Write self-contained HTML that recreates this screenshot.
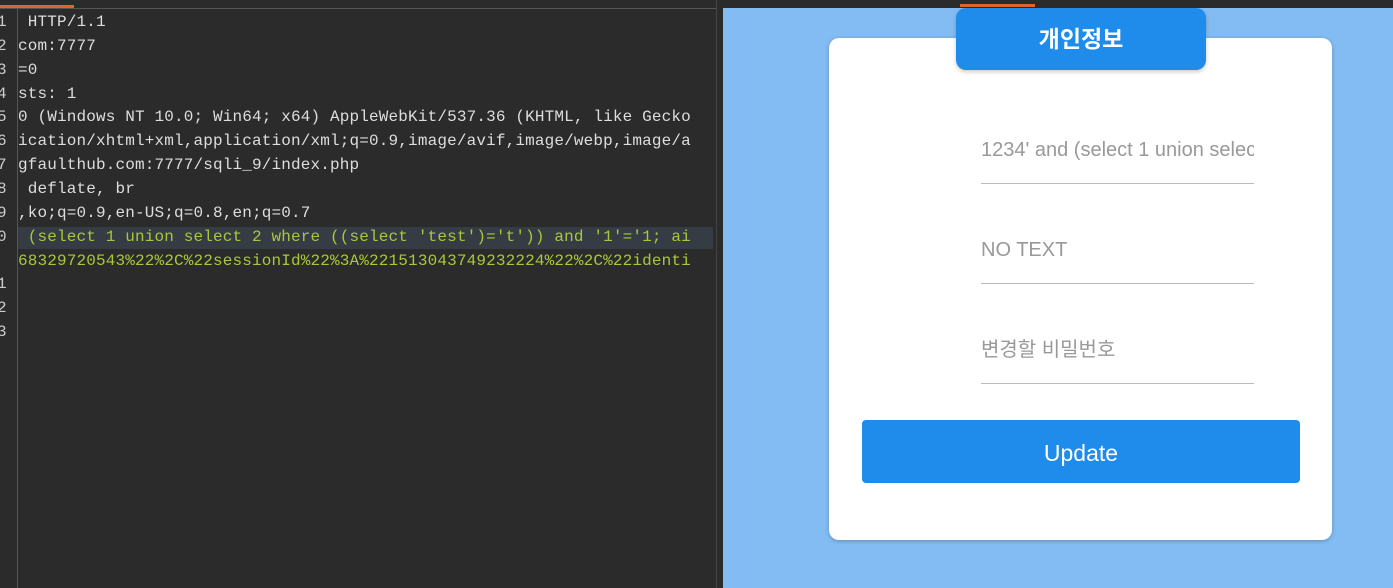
<!DOCTYPE html>
<html><head><meta charset="utf-8"><style>
body{margin:0;width:1393px;height:588px;background:#2b2b2b;position:relative;overflow:hidden;font-family:"Liberation Sans","Noto Sans CJK KR",sans-serif}
.top{position:absolute;left:0;top:0;width:1393px;height:8px;background:#2b2b2b;border-bottom:1px solid #555}
.tab1{position:absolute;left:0;top:5px;width:74px;height:3px;background:#e0622d}
.tab2{position:absolute;left:960px;top:4px;width:75px;height:3px;background:#e0622d}
.left{position:absolute;left:0;top:9px;width:715px;height:579px;background:#2b2b2b}
.gut{position:absolute;left:17px;top:9px;width:1px;height:579px;background:#555}
.ln{position:absolute;left:-3px;color:#ccc;font:16px "Liberation Mono",monospace}
.code{position:absolute;left:18px;color:#ddd;font:16px "Liberation Mono",monospace;white-space:pre;letter-spacing:0.15px;width:695px;overflow:hidden}
.hl{position:absolute;left:18px;top:227px;width:695px;height:22px;background:#363c44}
.div{position:absolute;left:716px;top:0;width:7px;height:588px;background:#2b2b2b;border-left:1px solid #444}
.right{position:absolute;left:723px;top:8px;width:670px;height:580px;background:#83bcf3}
.card{position:absolute;left:829px;top:38px;width:503px;height:502px;background:#fff;border-radius:10px;box-shadow:0 1px 4px rgba(0,0,0,.25)}
.hdr{position:absolute;left:956px;top:8px;width:250px;height:62px;background:#1f8cec;border-radius:10px;color:#fff;font-weight:bold;font-size:23px;text-align:center;line-height:62px;box-shadow:0 2px 4px rgba(0,0,0,.2)}
.inp{position:absolute;left:981px;width:273px;height:53px;border-bottom:1px solid #bbb;color:#999;font-size:20px;line-height:40px;padding-top:0;overflow:hidden;white-space:nowrap}
.btn{position:absolute;left:862px;top:420px;width:438px;height:63px;background:#1f8cec;border-radius:4px;color:#fff;font-size:23px;text-align:center;line-height:66px}
</style></head><body>
<div class="top"></div><div class="tab1"></div>
<div class="left"></div><div class="hl"></div><div class="gut"></div>
<div class="ln" style="top:13px">1</div><div class="ln" style="top:37px">2</div><div class="ln" style="top:61px">3</div><div class="ln" style="top:85px">4</div><div class="ln" style="top:108px">5</div><div class="ln" style="top:132px">6</div><div class="ln" style="top:156px">7</div><div class="ln" style="top:180px">8</div><div class="ln" style="top:204px">9</div><div class="ln" style="top:228px">0</div><div class="ln" style="top:275px">1</div><div class="ln" style="top:299px">2</div><div class="ln" style="top:323px">3</div>
<div class="code" style="top:13px"> HTTP/1.1</div>
<div class="code" style="top:37px">com:7777</div>
<div class="code" style="top:61px">=0</div>
<div class="code" style="top:85px">sts: 1</div>
<div class="code" style="top:108px">0 (Windows NT 10.0; Win64; x64) AppleWebKit/537.36 (KHTML, like Gecko</div>
<div class="code" style="top:132px">ication/xhtml+xml,application/xml;q=0.9,image/avif,image/webp,image/a</div>
<div class="code" style="top:156px">gfaulthub.com:7777/sqli_9/index.php</div>
<div class="code" style="top:180px"> deflate, br</div>
<div class="code" style="top:204px">,ko;q=0.9,en-US;q=0.8,en;q=0.7</div>
<div class="code" style="top:228px;color:#a8c83a"> (select 1 union select 2 where ((select 'test')='t')) and '1'='1; ai</div>
<div class="code" style="top:252px;color:#a8c83a">68329720543%22%2C%22sessionId%22%3A%221513043749232224%22%2C%22identi</div>
<div class="div"></div>
<div class="right"></div><div class="tab2"></div>
<div class="card"></div>
<div class="hdr">개인정보</div>
<div class="inp" style="top:130px">1234' and (select 1 union select</div>
<div class="inp" style="top:230px">NO TEXT</div>
<div class="inp" style="top:330px">변경할 비밀번호</div>
<div class="btn">Update</div>
</body></html>
